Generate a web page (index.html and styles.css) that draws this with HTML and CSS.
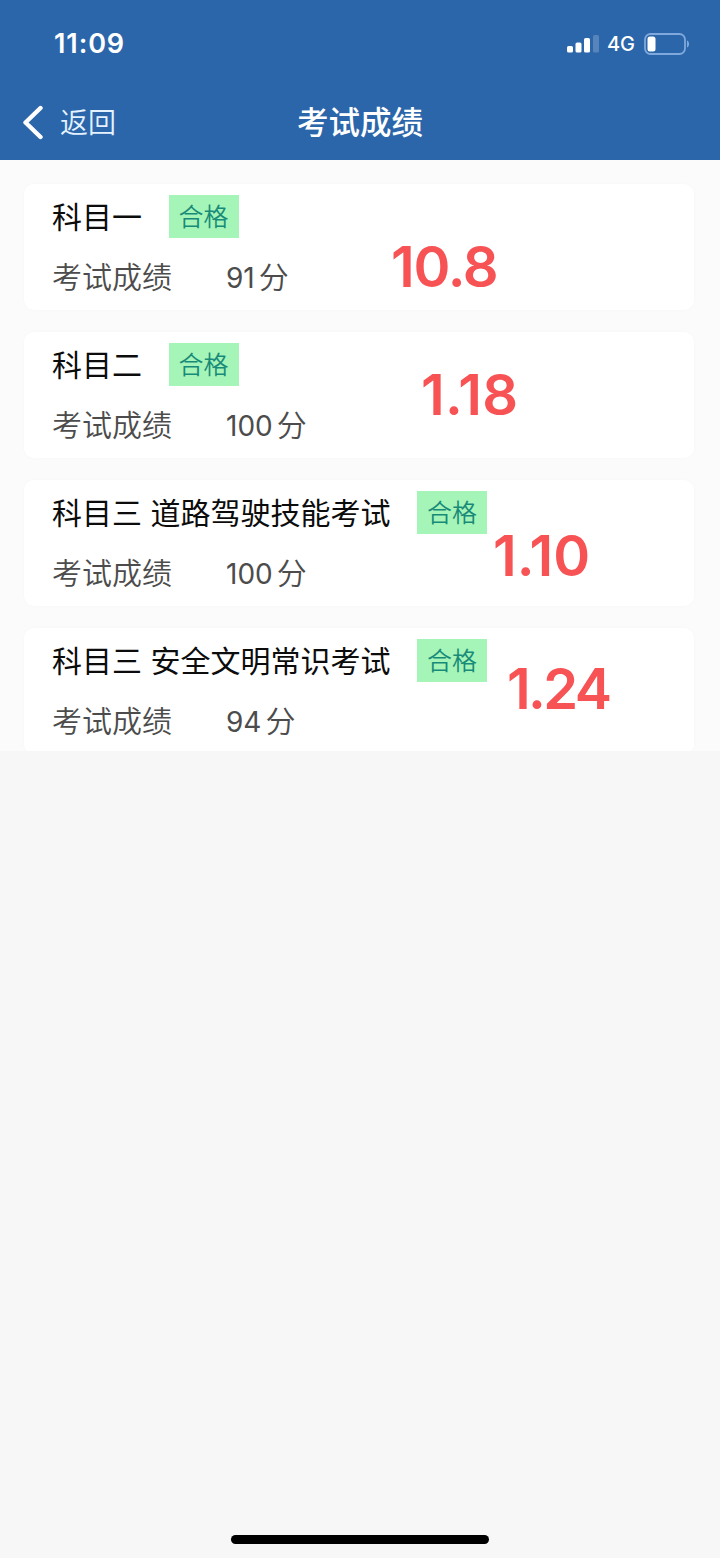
FILE: index.html
```html
<!DOCTYPE html>
<html lang="zh-CN">
  <head>
    <meta charset="UTF-8" />
    <meta name="viewport" content="width=device-width, initial-scale=1.0" />
    <title>考试成绩</title>
    <link rel="stylesheet" href="styles.css">
  </head>
  <body>
    <header class="header">
      <div class="status-bar">
        <span class="time">11:09</span>
        <div class="status-icons">
          <svg class="signal" width="32" height="18" viewBox="0 0 32 18" fill="#fff" aria-hidden="true">
            <rect x="0" y="11" width="6" height="6.5" rx="1.6" />
            <rect x="8.5" y="7.5" width="6" height="10" rx="1.6" />
            <rect x="17" y="3" width="6" height="14.5" rx="1.6" />
            <rect x="26" y="0" width="6" height="17.5" rx="1.6" opacity="0.2" />
          </svg>
          <span class="network">4G</span>
          <svg class="battery" width="46" height="22" viewBox="0 0 46 22" aria-hidden="true">
            <rect x="1" y="1" width="40" height="20" rx="5.5" fill="none" stroke="#7fa9dc" stroke-width="1.8" />
            <rect x="3.5" y="3.5" width="8" height="15" rx="2.5" fill="#fff" />
            <path d="M43 7.5c2.8 1.2 2.8 5.8 0 7z" fill="#7fa9dc" />
          </svg>
        </div>
      </div>
      <nav class="nav-bar">
        <a class="back" href="#">
          <svg width="22" height="36" viewBox="0 0 22 36" fill="none" stroke="#fff" stroke-width="4.4" stroke-linecap="round" stroke-linejoin="round" aria-hidden="true">
            <path d="M18.5 3L3.5 17.5L18.5 32" />
          </svg>
          <span>返回</span>
        </a>
        <h1 class="nav-title">考试成绩</h1>
      </nav>
    </header>

    <main class="results">
      <section class="card">
        <div class="row">
          <h2 class="subject">科目一</h2>
          <span class="badge">合格</span>
        </div>
        <div class="row score-row">
          <span class="label">考试成绩</span>
          <span class="score"><span class="num">91</span>分</span>
        </div>
        <span class="note note-1">10.8</span>
      </section>
      <section class="card">
        <div class="row">
          <h2 class="subject">科目二</h2>
          <span class="badge">合格</span>
        </div>
        <div class="row score-row">
          <span class="label">考试成绩</span>
          <span class="score"><span class="num">100</span>分</span>
        </div>
        <span class="note note-2">1.18</span>
      </section>
      <section class="card">
        <div class="row">
          <h2 class="subject">科目三 道路驾驶技能考试</h2>
          <span class="badge">合格</span>
        </div>
        <div class="row score-row">
          <span class="label">考试成绩</span>
          <span class="score"><span class="num">100</span>分</span>
        </div>
        <span class="note note-3">1.10</span>
      </section>
      <section class="card">
        <div class="row">
          <h2 class="subject">科目三 安全文明常识考试</h2>
          <span class="badge">合格</span>
        </div>
        <div class="row score-row">
          <span class="label">考试成绩</span>
          <span class="score"><span class="num">94</span>分</span>
        </div>
        <span class="note note-4">1.24</span>
      </section>
    </main>

    <div class="home-indicator"></div>
  </body>
</html>
```

FILE: styles.css
```css
:root {
  --primary-color: #2c66aa;
  --background-color: #f7f7f7;
  --list-background: #fbfbfb;
  --card-background: #ffffff;
  --text-color: #0c0c0c;
  --label-color: #4c4c4c;
  --badge-background: #a6f5b8;
  --badge-color: #188a78;
  --note-color: #f75254;
}

* {
  box-sizing: border-box;
}

body {
  display: flex;
  flex-direction: column;
  height: 1558px;
  margin: 0;
  font-family: Inter, "Noto Sans CJK SC", sans-serif;
  background: var(--background-color);
  color: var(--text-color);
}

.header {
  height: 160px;
  background: var(--primary-color);
  color: #fff;
}

.status-bar {
  display: flex;
  align-items: center;
  justify-content: space-between;
  height: 87px;
  padding: 0 30px 0 54px;
}

.time {
  font-size: 27px;
  font-weight: 600;
  letter-spacing: 0.9px;
}

.status-icons {
  display: flex;
  align-items: center;
}

.network {
  margin: 1px 9px 0 8px;
  font-size: 20px;
  font-weight: 500;
}

.nav-bar {
  display: grid;
  grid-template-columns: 1fr auto 1fr;
  align-items: center;
  height: 71px;
  padding: 0 22px;
}

.back {
  display: flex;
  align-items: center;
  gap: 16px;
  color: #e4f2ff;
  font-size: 28px;
  font-weight: 350;
  line-height: 40px;
  text-decoration: none;
}

.nav-title {
  margin: 0;
  font-size: 31.5px;
  font-weight: 500;
  line-height: 40px;
}

.results {
  display: flex;
  flex-direction: column;
  gap: 22px;
  height: 591px;
  padding: 24px 26px 0 24px;
  background: var(--list-background);
  overflow: hidden;
}

.card {
  position: relative;
  flex: none;
  height: 126px;
  padding: 11px 28px 0;
  background: var(--card-background);
  border-radius: 10px;
  box-shadow: 0 0 4px rgba(0, 0, 0, 0.02);
}

.row {
  display: flex;
  align-items: center;
  height: 43px;
}

.subject {
  margin: 2px 0 0;
  font-size: 30px;
  font-weight: 400;
  line-height: 43px;
}

.badge {
  width: 70px;
  height: 43px;
  margin-left: 26.5px;
  background: var(--badge-background);
  color: var(--badge-color);
  font-size: 25px;
  font-weight: 350;
  line-height: 45px;
  text-align: center;
}

.score-row {
  gap: 54px;
  margin-top: 18px;
  color: var(--label-color);
  font-size: 30px;
  font-weight: 350;
  line-height: 43px;
}

.num {
  margin-right: 4px;
  font-size: 28px;
  font-weight: 400;
}

/* exam dates, placed freely over the cards */
.note {
  position: absolute;
  color: var(--note-color);
  font-size: 56px;
  font-weight: 600;
  line-height: 60px;
}

.note-1 {
  top: 53px;
  left: 367px;
  letter-spacing: -1.2px;
}

.note-2 {
  top: 33px;
  left: 397px;
  letter-spacing: 0.3px;
}

.note-3 {
  top: 46px;
  left: 469px;
}

.note-4 {
  top: 31px;
  left: 483px;
  letter-spacing: -2.6px;
}

.home-indicator {
  width: 258px;
  height: 9px;
  margin: auto auto 14px;
  border-radius: 5px;
  background: #000;
}
```
